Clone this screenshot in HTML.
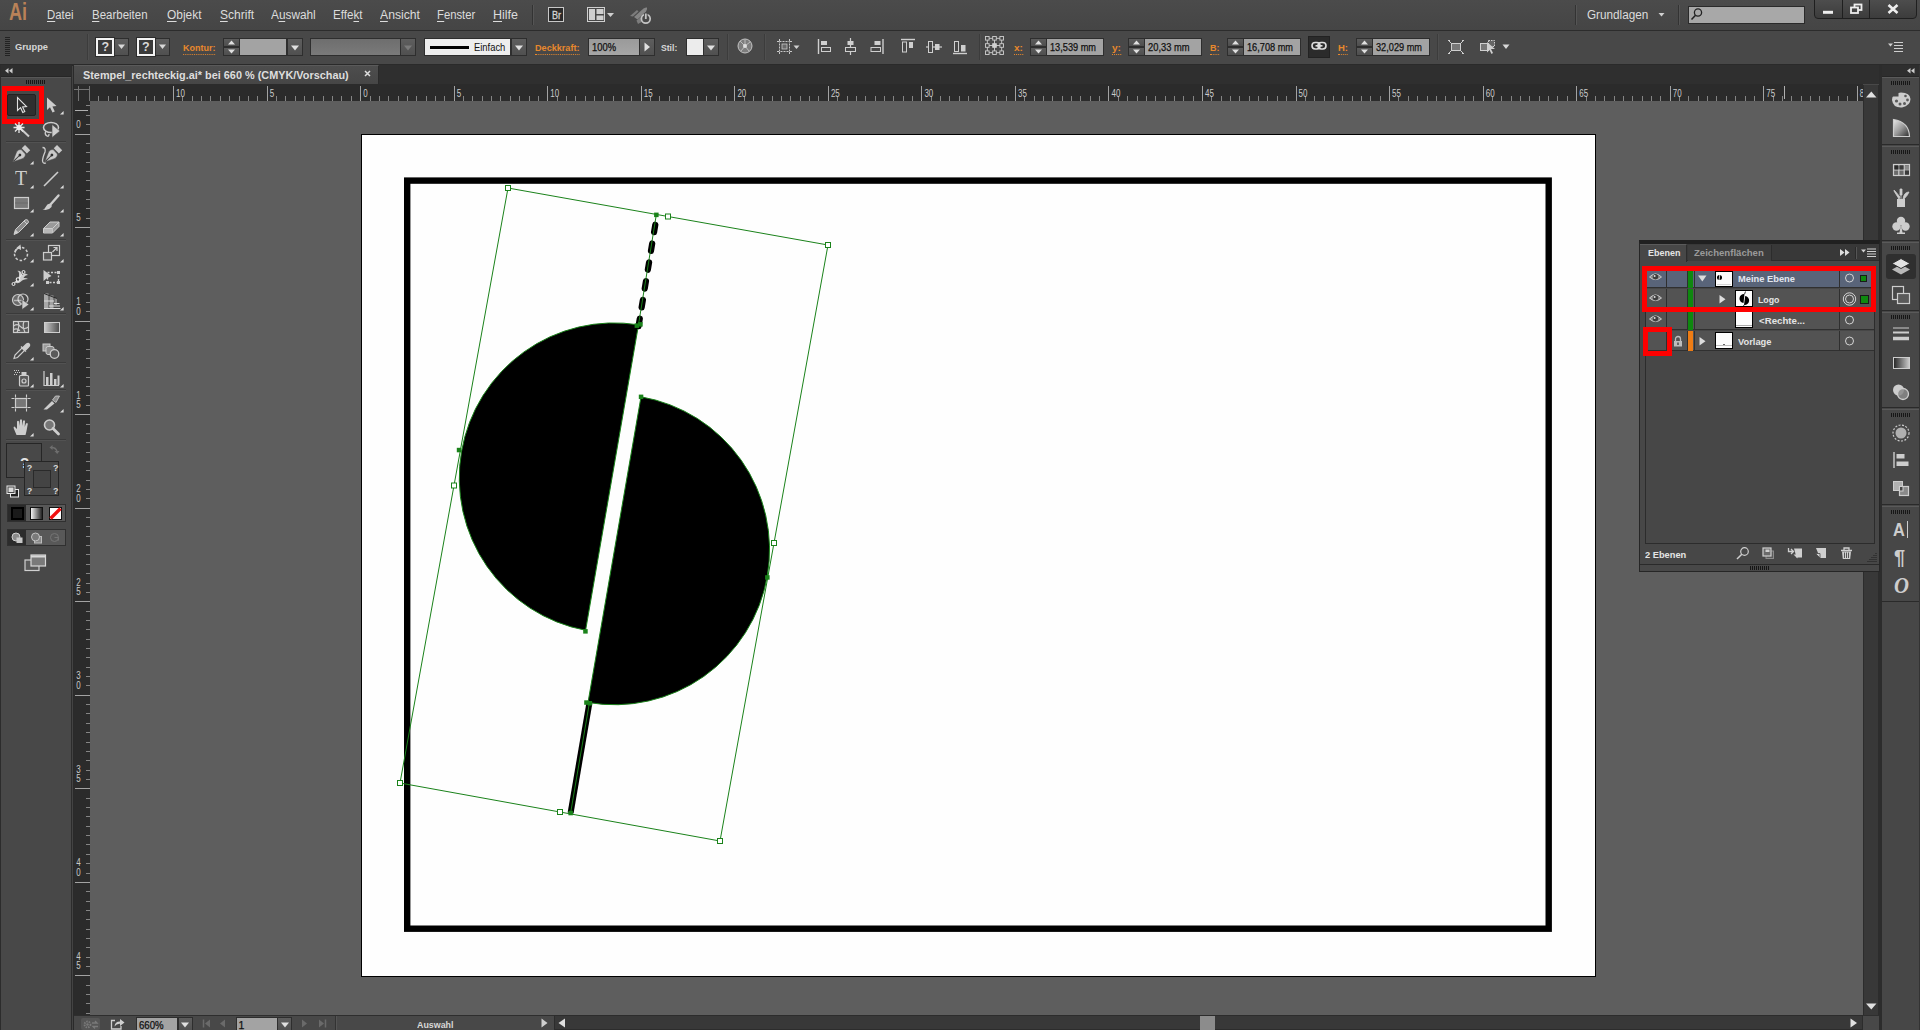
<!DOCTYPE html>
<html lang="de"><head><meta charset="utf-8"><title>Stempel_rechteckig.ai</title>
<style>
*{box-sizing:border-box;margin:0;padding:0}
html,body{width:1920px;height:1030px;overflow:hidden;background:#484848;font-family:"Liberation Sans",sans-serif;font-size:11px;color:#d8d8d8}
.a{position:absolute}
.t{position:absolute;white-space:nowrap;line-height:1}
svg{position:absolute;overflow:visible}
#menubar{left:0;top:0;width:1920px;height:30px;background:linear-gradient(#4b4b4b,#454545)}
#menubar .mi{position:absolute;top:8px;font-size:12.5px;color:#dcdcdc;white-space:nowrap;line-height:14px}
#menubar .mi i{position:absolute;top:12.500px;height:1px;background:#dcdcdc}
#ctrl{left:0;top:30px;width:1920px;height:35px;background:#484848;border-top:1px solid #2c2c2c;border-bottom:1px solid #2a2a2a}
#ctrl>*{margin-top:-1px}
.or{color:#e8882c;font-weight:bold}
.fld{position:absolute;background:#a3a3a3;border:1px solid #2e2e2e;color:#111;font-size:10.5px;line-height:16px;padding-left:3px;overflow:hidden;-webkit-text-stroke:.25px #111;white-space:nowrap}
.btn{position:absolute;background:linear-gradient(#5e5e5e,#505050);border:1px solid #2e2e2e}
.spin{position:absolute;width:17px;height:18px}
.spin i{position:absolute;left:0;width:17px;height:9px;background:linear-gradient(#5c5c5c,#4e4e4e);border:1px solid #2e2e2e}
.sep{position:absolute;width:1px;background:#333;box-shadow:1px 0 0 #555}
</style></head><body>
<div id="menubar" class="a">
<div class="t" style="left:8.800px;top:1.200px;font-size:23.500px;font-weight:bold;color:#b98258;transform:scaleX(.77);transform-origin:0 0">Ai</div>
<div class="mi" style="display:inline-block;transform:scaleX(0.9113);transform-origin:0 50%;left:47.4px"><i style="left:0.00px;width:9.03px"></i>Datei</div>
<div class="mi" style="display:inline-block;transform:scaleX(0.9195);transform-origin:0 50%;left:92px"><i style="left:0.00px;width:8.34px"></i>Bearbeiten</div>
<div class="mi" style="display:inline-block;transform:scaleX(0.9574);transform-origin:0 50%;left:167px"><i style="left:0.00px;width:9.73px"></i>Objekt</div>
<div class="mi" style="display:inline-block;transform:scaleX(0.9651);transform-origin:0 50%;left:219.8px"><i style="left:0.00px;width:8.34px"></i>Schrift</div>
<div class="mi" style="display:inline-block;transform:scaleX(0.9460);transform-origin:0 50%;left:271px"><i style="left:8.33px;width:6.97px"></i>Auswahl</div>
<div class="mi" style="display:inline-block;transform:scaleX(0.9296);transform-origin:0 50%;left:333.2px"><i style="left:22.00px;width:6.27px"></i>Effekt</div>
<div class="mi" style="display:inline-block;transform:scaleX(0.9756);transform-origin:0 50%;left:380px"><i style="left:0.00px;width:8.34px"></i>Ansicht</div>
<div class="mi" style="display:inline-block;transform:scaleX(0.9035);transform-origin:0 50%;left:436.7px"><i style="left:0.00px;width:7.64px"></i>Fenster</div>
<div class="mi" style="display:inline-block;transform:scaleX(0.9994);transform-origin:0 50%;left:493px"><i style="left:0.00px;width:9.03px"></i>Hilfe</div>
<div class="sep" style="left:532px;top:5px;height:20px"></div>
<div class="a" style="left:548px;top:7px;width:16px;height:15px;border:1px solid #c8c8c8;background:#2a2a2a"></div><div class="t" style="left:551.500px;top:9.500px;font-size:10.500px;color:#d4d4d4;transform:scaleX(.86);transform-origin:0 0;-webkit-text-stroke:.3px #d4d4d4">Br</div>
<svg style="left:587px;top:7px" width="30" height="16"><rect x="0.5" y="0.5" width="17" height="14" fill="none" stroke="#cfcfcf"/><rect x="2" y="2" width="6" height="11" fill="#cfcfcf"/><rect x="9.5" y="2" width="7" height="5" fill="#cfcfcf"/><rect x="9.5" y="8.5" width="7" height="4.5" fill="#cfcfcf"/><path d="M20 6h7l-3.5 4z" fill="#cfcfcf"/></svg>
<svg style="left:628px;top:4px" width="26" height="22"><path d="M2 12 L9 6 L10.500 7.500 L5 12.500z" fill="#7c7c7c"/><path d="M6 13 L15.500 4.500 Q18 3 19 3.500 Q19.500 5 18 7.500 L9.500 15.500z" fill="#858585"/><path d="M8.500 16.500 L13 13 L13.500 18 L10 20z" fill="#7c7c7c"/><circle cx="17.800" cy="14.800" r="4.400" fill="#484848" stroke="#c4c4c4" stroke-width="1.700"/><path d="M17.800 9v6" stroke="#484848" stroke-width="3.600"/><path d="M17.800 9.500v5.500" stroke="#c4c4c4" stroke-width="1.800"/></svg>
<div class="sep" style="left:1575px;top:5px;height:20px"></div>
<div class="mi" style="display:inline-block;transform:scaleX(0.9383);transform-origin:0 50%;left:1587.4px">Grundlagen</div>
<svg style="left:1658px;top:12px" width="8" height="6"><path d="M0.5 1h6l-3 3.5z" fill="#d0d0d0"/></svg>
<div class="sep" style="left:1678px;top:5px;height:20px"></div>
<div class="a" style="left:1688px;top:5.500px;width:117px;height:18px;background:#a8a8a8;border:1px solid #2a2a2a"></div>
<svg style="left:1690px;top:7px" width="14" height="14"><circle cx="8" cy="5.5" r="3.6" fill="none" stroke="#222" stroke-width="1.3"/><path d="M5.5 8.2 L1.5 12.5" stroke="#222" stroke-width="1.6"/></svg>
<div class="a" style="left:1814px;top:-2px;width:103px;height:21px;background:linear-gradient(#4e4e4e,#3c3c3c);border:1px solid #1f1f1f;border-radius:0 0 4px 4px"></div>
<div class="a" style="left:1842px;top:0;width:1px;height:18px;background:#1f1f1f"></div><div class="a" style="left:1869px;top:0;width:1px;height:18px;background:#1f1f1f"></div>
<svg style="left:1814px;top:0" width="103" height="19"><rect x="9" y="10.800" width="10" height="3" fill="#eee"/><rect x="40.500" y="4.500" width="7" height="5.500" fill="none" stroke="#eee" stroke-width="1.8"/><rect x="37" y="7.500" width="7" height="5.500" fill="#444" stroke="#eee" stroke-width="1.8"/><path d="M74.500 5 L83.500 13 M83.500 5 L74.500 13" stroke="#eee" stroke-width="2.6"/></svg>
</div>
<div id="ctrl" class="a">
<div class="a" style="left:5px;top:7px;width:5px;height:20px;background:repeating-linear-gradient(#222 0 1px,transparent 1px 2px)"></div>
<div class="t" style="display:inline-block;transform:scaleX(0.9471);transform-origin:0 50%;left:15px;top:11.500px;font-size:9.800px;font-weight:bold;color:#d6d6d6">Gruppe</div>
<div class="sep" style="left:87px;top:4px;height:26px;background:#3c3c3c;box-shadow:1px 0 0 #4f4f4f"></div>
<div class="a" style="left:96px;top:8px;width:18px;height:18px;border:2px solid #f4f4f4;background:#3a3a3a;outline:1px solid #2c2c2c"></div>
<div class="t" style="left:101.5px;top:11px;font-size:12.5px;font-weight:bold;color:#d8d8d8">?</div>
<div class="btn" style="left:114px;top:8px;width:15px;height:18px"></div>
<svg style="left:118px;top:14px" width="8" height="6"><path d="M0 0.500h7l-3.500 4.500z" fill="#d8d8d8"/></svg>
<div class="a" style="left:136.5px;top:8px;width:18px;height:18px;border:2px solid #f4f4f4;background:#3a3a3a;outline:1px solid #2c2c2c"></div>
<div class="t" style="left:142.0px;top:11px;font-size:12.5px;font-weight:bold;color:#d8d8d8">?</div>
<div class="btn" style="left:154.5px;top:8px;width:15px;height:18px"></div>
<svg style="left:158.5px;top:14px" width="8" height="6"><path d="M0 0.500h7l-3.500 4.500z" fill="#d8d8d8"/></svg>
<div class="t or" style="display:inline-block;transform:scaleX(0.9187);transform-origin:0 50%;left:183px;top:12.500px;font-size:9.800px;border-bottom:1px dotted #e8882c;padding-bottom:1.500px">Kontur:</div>
<div class="spin" style="left:222.5px;top:7.5px"><i style="top:0"></i><i style="top:9px"></i></div>
<svg style="left:222.5px;top:7.5px" width="17" height="18"><path d="M5 6.500h7l-3.500 -4z" fill="#e0e0e0"/><path d="M5 11.500h7l-3.500 4z" fill="#e0e0e0"/></svg>
<div class="fld" style="left:239px;top:7.500px;width:48px;height:18px"></div>
<div class="btn" style="left:286.5px;top:7.5px;width:16px;height:18px"></div>
<svg style="left:290.5px;top:14.5px" width="8" height="6"><path d="M0 0.500h8l-4 5z" fill="#e0e0e0"/></svg>
<div class="fld" style="left:309.500px;top:7.500px;width:91px;height:18px;background:linear-gradient(#6e6e6e,#7a7a7a)"></div>
<div class="btn" style="left:400px;top:7.5px;width:16px;height:18px"></div>
<svg style="left:404.0px;top:14.5px" width="8" height="6"><path d="M0 0.500h8l-4 5z" fill="#7a7a7a"/></svg>
<div class="fld" style="left:424px;top:7.500px;width:87px;height:18px;background:#eeeeee"></div>
<div class="a" style="left:430px;top:15.500px;width:39px;height:3px;background:#000"></div>
<div class="t" style="display:inline-block;transform:scaleX(0.8528);transform-origin:0 50%;left:473.500px;top:11.500px;font-size:11px;color:#111">Einfach</div>
<div class="btn" style="left:510.5px;top:7.5px;width:16px;height:18px"></div>
<svg style="left:514.5px;top:14.5px" width="8" height="6"><path d="M0 0.500h8l-4 5z" fill="#e0e0e0"/></svg>
<div class="t or" style="display:inline-block;transform:scaleX(0.9286);transform-origin:0 50%;left:535.300px;top:12.500px;font-size:9.800px;border-bottom:1px dotted #e8882c;padding-bottom:1.500px">Deckkraft:</div>
<div class="fld" style="left:587.500px;top:7.500px;width:52px;height:18px;background:linear-gradient(#9a9a9a,#a6a6a6)"><span style="display:inline-block;transform:scaleX(0.8935);transform-origin:0 50%;">100%</span></div>
<div class="btn" style="left:639px;top:7.500px;width:16px;height:18px"></div><svg style="left:644px;top:12px" width="7" height="10"><path d="M0.500 0.500v9l5.500 -4.500z" fill="#e0e0e0"/></svg>
<div class="t" style="display:inline-block;transform:scaleX(0.8803);transform-origin:0 50%;left:661px;top:12.500px;font-size:9.800px;font-weight:bold;color:#d6d6d6">Stil:</div>
<div class="fld" style="left:685.500px;top:7.500px;width:18px;height:18px;background:#ececec"></div>
<div class="btn" style="left:703px;top:7.5px;width:16px;height:18px"></div>
<svg style="left:707.0px;top:14.5px" width="8" height="6"><path d="M0 0.500h8l-4 5z" fill="#e0e0e0"/></svg>
<div class="sep" style="left:727px;top:4px;height:26px;background:#3c3c3c;box-shadow:1px 0 0 #4f4f4f"></div>
<svg style="left:737px;top:8px" width="16" height="16"><circle cx="8" cy="8" r="7" fill="#7d7d7d" stroke="#c4c4c4" stroke-width="1"/><path d="M8 8 L3 3 M8 8 L13 4 M8 8 L12 13 M8 8 L4 13 M8 8V1.500" stroke="#bbb" stroke-width="1"/><circle cx="8" cy="8" r="2" fill="#ddd"/></svg>
<div class="sep" style="left:763.500px;top:4px;height:26px;background:#3c3c3c;box-shadow:1px 0 0 #4f4f4f"></div>
<svg style="left:776px;top:8px" width="26" height="18"><rect x="3.500" y="3.500" width="10" height="10" fill="none" stroke="#c9c9c9" stroke-dasharray="2 1"/><rect x="6" y="6" width="5" height="5" fill="#6a6a6a" stroke="#c9c9c9" stroke-width=".8"/><path d="M1 3.500h2M1 13.500h2M14 3.500h2M14 13.500h2M3.500 1v2M13.500 1v2M3.500 14v2M13.500 14v2" stroke="#c9c9c9"/><path d="M17.500 7.500h6l-3 3.500z" fill="#d0d0d0"/></svg>
<svg style="left:817px;top:7.500px" width="16" height="18"><path d="M1.500 1v15" stroke="#cfcfcf" stroke-width="1.400"/><rect x="4" y="3" width="6" height="4" fill="#cfcfcf"/><rect x="4.500" y="9.500" width="9" height="4" fill="none" stroke="#cfcfcf"/></svg>
<svg style="left:844px;top:7.500px" width="14" height="18"><path d="M6.500 0v17" stroke="#cfcfcf" stroke-width="1.200"/><rect x="3.500" y="3" width="6" height="4" fill="#cfcfcf"/><rect x="1.500" y="9.500" width="10" height="4" fill="#484848" stroke="#cfcfcf"/></svg>
<svg style="left:869px;top:7.500px" width="16" height="18"><path d="M14 1v15" stroke="#cfcfcf" stroke-width="1.400"/><rect x="5.500" y="3" width="6" height="4" fill="#cfcfcf"/><rect x="2" y="9.500" width="9.500" height="4" fill="none" stroke="#cfcfcf"/></svg>
<svg style="left:900px;top:7.500px" width="16" height="18"><path d="M1 1.500h14" stroke="#cfcfcf" stroke-width="1.400"/><rect x="2.500" y="4" width="4" height="10" fill="none" stroke="#cfcfcf"/><rect x="9" y="4" width="4" height="6" fill="#cfcfcf"/></svg>
<svg style="left:926px;top:7.500px" width="17" height="18"><path d="M0 9h16" stroke="#cfcfcf" stroke-width="1.200"/><rect x="2.500" y="3.500" width="4" height="11" fill="#484848" stroke="#cfcfcf"/><rect x="9" y="6" width="4.500" height="6" fill="#cfcfcf"/></svg>
<svg style="left:953px;top:7.500px" width="16" height="18"><path d="M0 15.500h14" stroke="#cfcfcf" stroke-width="1.400"/><rect x="1.500" y="3.500" width="4" height="10" fill="none" stroke="#cfcfcf"/><rect x="8" y="7" width="4.500" height="6.500" fill="#cfcfcf"/></svg>
<div class="sep" style="left:978.500px;top:4px;height:26px;background:#3c3c3c;box-shadow:1px 0 0 #4f4f4f"></div>
<svg style="left:985px;top:6px" width="20" height="20"><rect x="2.300" y="2.300" width="14.400" height="14.400" fill="none" stroke="#cfcfcf" stroke-width=".9"/><path d="M2.300 9.500h14.400M9.500 2.300v14.400" stroke="#cfcfcf" stroke-width=".9"/><rect x="0.5" y="0.5" width="3.600" height="3.600" fill="#484848" stroke="#cfcfcf" stroke-width=".9"/><rect x="0.5" y="7.7" width="3.600" height="3.600" fill="#484848" stroke="#cfcfcf" stroke-width=".9"/><rect x="0.5" y="14.9" width="3.600" height="3.600" fill="#484848" stroke="#cfcfcf" stroke-width=".9"/><rect x="7.7" y="0.5" width="3.600" height="3.600" fill="#484848" stroke="#cfcfcf" stroke-width=".9"/><rect x="7.7" y="7.7" width="3.600" height="3.600" fill="#cfcfcf" stroke="#cfcfcf" stroke-width=".9"/><rect x="7.7" y="14.9" width="3.600" height="3.600" fill="#484848" stroke="#cfcfcf" stroke-width=".9"/><rect x="14.9" y="0.5" width="3.600" height="3.600" fill="#484848" stroke="#cfcfcf" stroke-width=".9"/><rect x="14.9" y="7.7" width="3.600" height="3.600" fill="#484848" stroke="#cfcfcf" stroke-width=".9"/><rect x="14.9" y="14.9" width="3.600" height="3.600" fill="#484848" stroke="#cfcfcf" stroke-width=".9"/></svg>
<div class="t or" style="display:inline-block;transform:scaleX(1.0323);transform-origin:0 50%;left:1013.5px;top:12.500px;font-size:9.800px;border-bottom:1px dotted #e8882c;padding-bottom:1.500px">x:</div>
<div class="spin" style="left:1029.5px;top:7.5px"><i style="top:0"></i><i style="top:9px"></i></div>
<svg style="left:1029.5px;top:7.5px" width="17" height="18"><path d="M5 6.500h7l-3.500 -4z" fill="#e0e0e0"/><path d="M5 11.500h7l-3.500 4z" fill="#e0e0e0"/></svg>
<div class="fld" style="left:1046px;top:7.500px;width:58px;height:18px"><span style="display:inline-block;transform:scaleX(0.8757);transform-origin:0 50%;">13,539 mm</span></div>
<div class="t or" style="display:inline-block;transform:scaleX(1.0323);transform-origin:0 50%;left:1112px;top:12.500px;font-size:9.800px;border-bottom:1px dotted #e8882c;padding-bottom:1.500px">y:</div>
<div class="spin" style="left:1127.5px;top:7.5px"><i style="top:0"></i><i style="top:9px"></i></div>
<svg style="left:1127.5px;top:7.5px" width="17" height="18"><path d="M5 6.500h7l-3.500 -4z" fill="#e0e0e0"/><path d="M5 11.500h7l-3.500 4z" fill="#e0e0e0"/></svg>
<div class="fld" style="left:1144px;top:7.500px;width:58px;height:18px"><span style="display:inline-block;transform:scaleX(0.8889);transform-origin:0 50%;">20,33 mm</span></div>
<div class="t or" style="display:inline-block;transform:scaleX(0.9184);transform-origin:0 50%;left:1210px;top:12.500px;font-size:9.800px;border-bottom:1px dotted #e8882c;padding-bottom:1.500px">B:</div>
<div class="spin" style="left:1226.5px;top:7.5px"><i style="top:0"></i><i style="top:9px"></i></div>
<svg style="left:1226.5px;top:7.5px" width="17" height="18"><path d="M5 6.500h7l-3.500 -4z" fill="#e0e0e0"/><path d="M5 11.500h7l-3.500 4z" fill="#e0e0e0"/></svg>
<div class="fld" style="left:1243px;top:7.500px;width:58px;height:18px"><span style="display:inline-block;transform:scaleX(0.8757);transform-origin:0 50%;">16,708 mm</span></div>
<div class="a" style="left:1308px;top:5.500px;width:22px;height:22px;background:#2b2b2b;border:1px solid #222"></div>
<svg style="left:1311px;top:11px" width="16" height="10"><rect x="1" y="1.500" width="8" height="6.500" rx="3.200" fill="none" stroke="#ddd" stroke-width="1.600"/><rect x="7" y="1.500" width="8" height="6.500" rx="3.200" fill="none" stroke="#ddd" stroke-width="1.600"/><path d="M4.500 4.800h7" stroke="#ddd" stroke-width="1.600"/></svg>
<div class="t or" style="display:inline-block;transform:scaleX(0.9668);transform-origin:0 50%;left:1338px;top:12.500px;font-size:9.800px;border-bottom:1px dotted #e8882c;padding-bottom:1.500px">H:</div>
<div class="spin" style="left:1355.5px;top:7.5px"><i style="top:0"></i><i style="top:9px"></i></div>
<svg style="left:1355.5px;top:7.5px" width="17" height="18"><path d="M5 6.500h7l-3.500 -4z" fill="#e0e0e0"/><path d="M5 11.500h7l-3.500 4z" fill="#e0e0e0"/></svg>
<div class="fld" style="left:1372px;top:7.500px;width:58px;height:18px"><span style="display:inline-block;transform:scaleX(0.8757);transform-origin:0 50%;">32,029 mm</span></div>
<div class="sep" style="left:1437px;top:4px;height:26px;background:#3c3c3c;box-shadow:1px 0 0 #4f4f4f"></div>
<svg style="left:1448px;top:9px" width="16" height="16"><rect x="3.500" y="4.500" width="9" height="7" fill="#777" stroke="#cfcfcf"/><path d="M0.500 1.500l3 3M15.500 1.500l-3 3M0.500 14.500l3 -3M15.500 14.500l-3 -3M0 1.500h2M14 1.500h2M0 14.500h2M14 14.500h2" stroke="#cfcfcf" stroke-width="1"/></svg>
<svg style="left:1479px;top:9px" width="32" height="16"><rect x="1.500" y="4.500" width="8" height="7" fill="#777" stroke="#cfcfcf"/><rect x="9.500" y="1.500" width="6" height="6" fill="#666" stroke="#cfcfcf" stroke-dasharray="1.500 1"/><path d="M8 3l8 7h-4l2 4-1.500 1-2-4-2.500 2.500z" fill="#cfcfcf"/><path d="M23.500 5.500h7l-3.500 4.500z" fill="#d8d8d8"/></svg>
<svg style="left:1888px;top:11px" width="16" height="12"><path d="M0 2.500h5l-2.500 3z" fill="#cfcfcf"/><path d="M6 1.500h9M6 4.500h9M6 7.500h9M6 10.500h9" stroke="#cfcfcf" stroke-width="1.200"/></svg>
</div>
<div id="tools" class="a" style="left:0;top:65px;width:72px;height:965px;background:#484848;border-left:1px solid #2c2c2c;border-right:1px solid #2c2c2c">
<div class="a" style="left:0;top:0;width:70px;height:12px;background:#2e2e2e;border-bottom:1px solid #262626"></div>
<svg style="left:3.800px;top:3px" width="9" height="6"><path d="M3.500 0v5.400l-3.500 -2.700zM7.500 0v5.400l-3.500 -2.700z" fill="#cdcdcd"/></svg>
<div class="a" style="left:0;top:12px;width:70px;height:1px;background:#575757"></div>
<div class="a" style="left:25px;top:15px;width:20px;height:4px;background:repeating-linear-gradient(90deg,#161616 0 1px,transparent 1px 2px)"></div>
<div class="a" style="left:5px;top:76.30000000000001px;width:60px;height:1px;background:#3a3a3a;box-shadow:0 1px 0 #525252"></div>
<div class="a" style="left:5px;top:174.3px;width:60px;height:1px;background:#3a3a3a;box-shadow:0 1px 0 #525252"></div>
<div class="a" style="left:5px;top:248px;width:60px;height:1px;background:#3a3a3a;box-shadow:0 1px 0 #525252"></div>
<div class="a" style="left:5px;top:297.4px;width:60px;height:1px;background:#3a3a3a;box-shadow:0 1px 0 #525252"></div>
<div class="a" style="left:5px;top:324px;width:60px;height:1px;background:#3a3a3a;box-shadow:0 1px 0 #525252"></div>
<div class="a" style="left:5px;top:374.4px;width:60px;height:1px;background:#3a3a3a;box-shadow:0 1px 0 #525252"></div>
<div class="a" style="left:6px;top:29px;width:29px;height:22px;background:#2f2f2f;border:1px solid #222;border-radius:2px"></div>
<div class="a" style="left:1px;top:20.700px;width:42.300px;height:38px;border:5px solid #fe0000"></div>
<svg style="left:10.0px;top:30.0px" width="20" height="20" viewBox="0 0 20 20"><path d="M6.500 2.500 L6.500 15.500 L9.600 12.700 L11.800 17.500 L13.800 16.600 L11.600 11.900 L15.500 11.500z" fill="#2f2f2f" stroke="#e0e0e0" stroke-width="1.100" stroke-linejoin="miter"/></svg>
<svg style="left:40.0px;top:30.0px" width="20" height="20" viewBox="0 0 20 20"><path d="M6 2.500 L6 15 L9 12.300 L11.500 17.500 L13.800 16.400 L11.400 11.400 L15.500 11z" fill="#cdcdcd"/></svg>
<svg style="left:58.8px;top:46.4px" width="4" height="4"><path d="M3.600 0v3.600h-3.600z" fill="#dcdcdc"/></svg>
<svg style="left:10.5px;top:54.5px" width="20" height="20" viewBox="0 0 20 20"><path d="M7.500 7.500 L17 16.500" stroke="#cdcdcd" stroke-width="2"/><path d="M7 2v11M1.500 7.500h11M3 3.500l8 8M11 3.500l-8 8" stroke="#e6e6e6" stroke-width="1.300"/><circle cx="7" cy="7.500" r="2.600" fill="#eee"/></svg>
<svg style="left:40.5px;top:55.30000000000001px" width="20" height="20" viewBox="0 0 20 20"><ellipse cx="9" cy="7.500" rx="7.500" ry="5" fill="none" stroke="#cdcdcd" stroke-width="1.500"/><path d="M4 11 q-2 3 1 5 q2 1 2 -2" fill="none" stroke="#cdcdcd" stroke-width="1.300"/><path d="M10 4.500 L10 17.500 L18 11z" fill="#cdcdcd" stroke="#484848" stroke-width=".6"/></svg>
<svg style="left:8.3px;top:77.1px" width="24" height="24" viewBox="0 0 24 24"><g transform="rotate(46 12 12)"><path d="M12 23.500 L7.300 13.500 Q6.800 10 9 8.800 L15 8.800 Q17.200 10 16.700 13.500z" fill="#c9c9c9" stroke="#484848" stroke-width=".5"/><path d="M12 22.500v-8" stroke="#3a3a3a" stroke-width="1"/><circle cx="12" cy="13.500" r="1.400" fill="#2e2e2e"/><rect x="8.300" y="2.800" width="7.400" height="4.600" fill="#c9c9c9"/></g></svg>
<svg style="left:28.8px;top:96.4px" width="4" height="4"><path d="M3.600 0v3.600h-3.600z" fill="#dcdcdc"/></svg>
<svg style="left:40.2px;top:77.30000000000001px" width="24" height="24" viewBox="0 0 24 24"><g transform="rotate(46 12 12)"><path d="M12 23.500 L7.300 13.500 Q6.800 10 9 8.800 L15 8.800 Q17.200 10 16.700 13.500z" fill="#c9c9c9" stroke="#484848" stroke-width=".5"/><path d="M12 22.500v-8" stroke="#3a3a3a" stroke-width="1"/><circle cx="12" cy="13.500" r="1.400" fill="#2e2e2e"/><rect x="8.300" y="2.800" width="7.400" height="4.600" fill="#c9c9c9"/></g><path d="M1.500 5.500 q3.500 0 2.500 4.500 q-2.500 6 -2.500 9 q0.500 3 3.500 2" fill="none" stroke="#cdcdcd" stroke-width="1.300"/></svg>
<div class="t" style="left:13.800px;top:103px;font-family:'Liberation Serif',serif;font-size:21px;color:#cdcdcd;transform:scaleX(.94);transform-origin:0 0">T</div>
<svg style="left:28.8px;top:120.4px" width="4" height="4"><path d="M3.600 0v3.600h-3.600z" fill="#dcdcdc"/></svg>
<svg style="left:40.0px;top:104.0px" width="20" height="20" viewBox="0 0 20 20"><path d="M3 17 L17 3" stroke="#cdcdcd" stroke-width="1.600"/></svg>
<svg style="left:58.8px;top:120.4px" width="4" height="4"><path d="M3.600 0v3.600h-3.600z" fill="#dcdcdc"/></svg>
<svg style="left:10.0px;top:128.0px" width="20" height="20" viewBox="0 0 20 20"><rect x="3.500" y="4.500" width="14" height="11" fill="#7a7a7a" stroke="#cdcdcd" stroke-width="1.200"/><path d="M4 10h13" stroke="#6a6a6a"/></svg>
<svg style="left:28.8px;top:144.4px" width="4" height="4"><path d="M3.600 0v3.600h-3.600z" fill="#dcdcdc"/></svg>
<svg style="left:40.0px;top:128.0px" width="20" height="20" viewBox="0 0 20 20"><path d="M17.500 2.500 L9.500 11.500" stroke="#cdcdcd" stroke-width="2.400" stroke-linecap="round"/><path d="M9.500 11 q-3 -1 -4.500 2.500 q-1 2.500 -3.500 3 q6 1.500 9 -2.500 q1 -1.500 -1 -3z" fill="#cdcdcd"/></svg>
<svg style="left:58.8px;top:144.4px" width="4" height="4"><path d="M3.600 0v3.600h-3.600z" fill="#dcdcdc"/></svg>
<svg style="left:10.0px;top:152.0px" width="20" height="20" viewBox="0 0 20 20"><path d="M3 17.500 L4.500 12.500 L14 3 Q16 2 17 3.500 Q18 5 17 6 L7.500 15.500z" fill="#8a8a8a" stroke="#cdcdcd" stroke-width="1"/><path d="M3 17.500 L4.500 12.500 L7.500 15.500z" fill="#cdcdcd"/><path d="M13 4l3 3" stroke="#cdcdcd"/></svg>
<svg style="left:28.8px;top:168.4px" width="4" height="4"><path d="M3.600 0v3.600h-3.600z" fill="#dcdcdc"/></svg>
<svg style="left:40.0px;top:152.0px" width="20" height="20" viewBox="0 0 20 20"><path d="M2.500 11.500 L9 5 L18 5 L18 9.500 L11.500 16 L2.500 16z" fill="#9a9a9a" stroke="#cdcdcd" stroke-width="1"/><path d="M2.500 11.500 L11.500 11.500 L18 5 M11.500 11.500V16" stroke="#cdcdcd" stroke-width="1" fill="none"/><path d="M3 12h8.500v4h-8.500z" fill="#b8b8b8"/></svg>
<svg style="left:58.8px;top:168.4px" width="4" height="4"><path d="M3.600 0v3.600h-3.600z" fill="#dcdcdc"/></svg>
<svg style="left:10.0px;top:178.0px" width="20" height="20" viewBox="0 0 20 20"><circle cx="10" cy="11" r="6.500" fill="none" stroke="#cdcdcd" stroke-width="1.500" stroke-dasharray="2.600 1.800"/><path d="M4 9.500 A6.500 6.500 0 0 1 10 4.500" fill="none" stroke="#cdcdcd" stroke-width="1.500"/><path d="M9.500 1.500 L5.500 4.700 L10 7z" fill="#cdcdcd"/></svg>
<svg style="left:28.8px;top:194.4px" width="4" height="4"><path d="M3.600 0v3.600h-3.600z" fill="#dcdcdc"/></svg>
<svg style="left:40.0px;top:178.0px" width="20" height="20" viewBox="0 0 20 20"><rect x="7.500" y="2.500" width="11" height="10" fill="none" stroke="#cdcdcd" stroke-width="1.200"/><rect x="2.500" y="9.500" width="8" height="7.500" fill="#5a5a5a" stroke="#cdcdcd" stroke-width="1.200"/><path d="M11.500 9 L16 4.500 M12.500 4.500h3.500v3.500" fill="none" stroke="#cdcdcd" stroke-width="1.200"/></svg>
<svg style="left:58.8px;top:194.4px" width="4" height="4"><path d="M3.600 0v3.600h-3.600z" fill="#dcdcdc"/></svg>
<svg style="left:10.0px;top:202.0px" width="20" height="20" viewBox="0 0 20 20"><path d="M3 15 Q7 14 8 9 Q8.500 4 6 4 Q10 3 11 8 Q14 5 17 8 Q14 8 12.500 11 Q15 10.500 17 12 Q12 12 10 14.500 Q7 17.500 3 15z" fill="#cdcdcd"/><circle cx="7" cy="12.500" r="1.800" fill="#484848" stroke="#f0f0f0" stroke-width="1.100"/><circle cx="12.500" cy="5" r="1.500" fill="#484848" stroke="#f0f0f0"/><circle cx="2.500" cy="17" r="1.500" fill="#484848" stroke="#f0f0f0"/><path d="M3.500 16l2.500 -2.500M8.200 11.200l3.300 -5" stroke="#f0f0f0" stroke-width=".8"/></svg>
<svg style="left:28.8px;top:218.4px" width="4" height="4"><path d="M3.600 0v3.600h-3.600z" fill="#dcdcdc"/></svg>
<svg style="left:40.0px;top:202.0px" width="20" height="20" viewBox="0 0 20 20"><rect x="6.500" y="5.500" width="11" height="10" fill="none" stroke="#cdcdcd" stroke-width="1.300" stroke-dasharray="2 1.500"/><path d="M2.500 3 L2.500 14 L5.500 11.500 L10.500 9z" fill="#cdcdcd"/><rect x="16" y="4" width="3" height="3" fill="#cdcdcd"/><rect x="16" y="14" width="3" height="3" fill="#cdcdcd"/><rect x="5" y="14" width="3" height="3" fill="#cdcdcd"/></svg>
<svg style="left:10.0px;top:226.0px" width="20" height="20" viewBox="0 0 20 20"><circle cx="7" cy="9" r="5.500" fill="#6a6a6a" stroke="#cdcdcd" stroke-width="1.200"/><circle cx="12" cy="8" r="5" fill="none" stroke="#cdcdcd" stroke-width="1.200"/><path d="M3.500 9.500h7" stroke="#fff" stroke-width="1.400" stroke-dasharray="1 1"/><path d="M11 8.500 L11 18.500 L18 13.500z" fill="#cdcdcd" stroke="#484848" stroke-width=".6"/></svg>
<svg style="left:28.8px;top:242.4px" width="4" height="4"><path d="M3.600 0v3.600h-3.600z" fill="#dcdcdc"/></svg>
<svg style="left:40.0px;top:226.0px" width="20" height="20" viewBox="0 0 20 20"><rect x="3" y="2.500" width="4.500" height="15" fill="#a8a8a8"/><rect x="8.500" y="4.500" width="4" height="13" fill="#a0a0a0"/><rect x="13.500" y="7" width="2.500" height="7" fill="#8c8c8c"/><path d="M3 10h10M3 17.500h16.500M8 15h11M13 12.500h5.500" stroke="#dcdcdc" stroke-width="1.200"/><path d="M3 2.500L16 7.500" stroke="#2a2a2a" stroke-width="1"/></svg>
<svg style="left:58.8px;top:242.4px" width="4" height="4"><path d="M3.600 0v3.600h-3.600z" fill="#dcdcdc"/></svg>
<svg style="left:10.0px;top:252.0px" width="20" height="20" viewBox="0 0 20 20"><rect x="2.500" y="4.500" width="15" height="11" fill="#5a5a5a" stroke="#cdcdcd" stroke-width="1.200"/><path d="M2.500 9 Q7 6 10 10 Q13 13 17.500 10 M7 4.500 Q9 9 6 15.500 M13 4.500 Q11 9 14 15.500 M2.500 12.500 Q6 11 9 13.500" fill="none" stroke="#cdcdcd" stroke-width="1.200"/></svg>
<div class="a" style="left:43px;top:256.5px;width:16px;height:11.500px;border:1px solid #cdcdcd;background:linear-gradient(90deg,#c8c8c8,#505050)"></div>
<svg style="left:10.0px;top:276.0px" width="20" height="20" viewBox="0 0 20 20"><path d="M3 17.500 L4 14 L11 7 L13.500 9.500 L6.500 16.500z" fill="#484848" stroke="#cdcdcd" stroke-width="1.200"/><path d="M10 5.500 L15 10.500 M11.500 7 L15.500 3 Q17.500 1.500 18.500 3.500 Q19 5 17.500 6 L14 9.500z" fill="#cdcdcd" stroke="#cdcdcd" stroke-width="1.400"/></svg>
<svg style="left:28.8px;top:292.4px" width="4" height="4"><path d="M3.600 0v3.600h-3.600z" fill="#dcdcdc"/></svg>
<svg style="left:40.0px;top:276.0px" width="20" height="20" viewBox="0 0 20 20"><rect x="2" y="3" width="7" height="7" fill="#9a9a9a" stroke="#cdcdcd"/><rect x="5" y="5.500" width="8" height="8" rx="2" fill="#8a8a8a" stroke="#cdcdcd"/><circle cx="13.500" cy="13" r="4.300" fill="#5a5a5a" stroke="#cdcdcd" stroke-width="1.300"/></svg>
<svg style="left:12.0px;top:303.0px" width="20" height="20" viewBox="0 0 20 20"><rect x="6.500" y="7.500" width="9" height="10.500" rx="1" fill="#5a5a5a" stroke="#cdcdcd" stroke-width="1.200"/><circle cx="11" cy="13" r="2" fill="none" stroke="#cdcdcd" stroke-width="1.200"/><rect x="8.500" y="4" width="5" height="3" fill="#cdcdcd"/><path d="M1 2.500h6M2 4.500h5M1 6.500h4" stroke="#cdcdcd" stroke-width="1" stroke-dasharray="1 1"/></svg>
<svg style="left:28.8px;top:319.4px" width="4" height="4"><path d="M3.600 0v3.600h-3.600z" fill="#dcdcdc"/></svg>
<svg style="left:40.0px;top:303.0px" width="20" height="20" viewBox="0 0 20 20"><path d="M3 3v14.500h15" fill="none" stroke="#cdcdcd" stroke-width="1.200"/><rect x="5" y="9" width="2.500" height="8" fill="#cdcdcd"/><rect x="9" y="5" width="2.500" height="12" fill="#cdcdcd"/><rect x="13" y="11" width="2.500" height="6" fill="#cdcdcd"/><rect x="16.500" y="7.500" width="2" height="9.500" fill="#cdcdcd"/></svg>
<svg style="left:58.8px;top:319.4px" width="4" height="4"><path d="M3.600 0v3.600h-3.600z" fill="#dcdcdc"/></svg>
<svg style="left:10.0px;top:328.0px" width="20" height="20" viewBox="0 0 20 20"><rect x="4.500" y="5.500" width="11" height="9" fill="#777" stroke="#cdcdcd" stroke-width="1.200"/><path d="M0.500 5.500h3M16.500 5.500h3M0.500 14.500h3M16.500 14.500h3M4.500 1.500v3M15.500 1.500v3M4.500 15.500v3M15.500 15.500v3" stroke="#cdcdcd" stroke-width="1.100"/></svg>
<svg style="left:40.0px;top:328.0px" width="20" height="20" viewBox="0 0 20 20"><path d="M2.500 16.500 L11 8 L13.500 10.500 L6 16.500z" fill="#cdcdcd"/><path d="M11.500 7 L14.500 3 L18.500 3 L15 9.500z" fill="#8d8d8d" stroke="#cdcdcd" stroke-width=".8"/></svg>
<svg style="left:58.8px;top:344.4px" width="4" height="4"><path d="M3.600 0v3.600h-3.600z" fill="#dcdcdc"/></svg>
<svg style="left:10.0px;top:352.0px" width="20" height="20" viewBox="0 0 20 20"><path d="M5.500 18 L3 12 Q2 9.500 3.500 9.500 L6 12 L6 4.500 Q7 3 8 4.500 L8.300 9 L9 3 Q10 1.500 11 3 L11 9 L12 4 Q13 2.500 14 4 L13.700 10 L15 6.500 Q16.500 5.500 16.800 7 L15.500 14 L14.500 18z" fill="#cdcdcd"/></svg>
<svg style="left:28.8px;top:368.4px" width="4" height="4"><path d="M3.600 0v3.600h-3.600z" fill="#dcdcdc"/></svg>
<svg style="left:40.0px;top:352.0px" width="20" height="20" viewBox="0 0 20 20"><circle cx="8.500" cy="8" r="5" fill="#777" stroke="#cdcdcd" stroke-width="1.600"/><path d="M12 11.500 L17.500 17" stroke="#cdcdcd" stroke-width="2.800" stroke-linecap="round"/></svg>
<div class="a" style="left:4.500px;top:377.700px;width:36px;height:35.300px;background:#484848;border:1px solid #262626"></div>
<div class="t" style="left:19px;top:390px;font-size:15px;font-weight:bold;color:#e4e4e4">?</div>
<div class="a" style="left:22.700px;top:396px;width:35.800px;height:35.300px;background:#484848;border:1px solid #262626"></div>
<div class="a" style="left:31.700px;top:405px;width:18px;height:17.500px;background:#444;border:1px solid #2a2a2a"></div>
<div class="t" style="left:25.7px;top:399px;font-size:9px;font-weight:bold;color:#d8d8d8">?</div>
<div class="t" style="left:52px;top:399px;font-size:9px;font-weight:bold;color:#d8d8d8">?</div>
<div class="t" style="left:25.7px;top:421.5px;font-size:9px;font-weight:bold;color:#d8d8d8">?</div>
<div class="t" style="left:52px;top:421.5px;font-size:9px;font-weight:bold;color:#d8d8d8">?</div>
<svg style="left:48px;top:379px" width="12" height="11"><path d="M2.500 3.500 Q7 3.500 8 7.500" fill="none" stroke="#6e6e6e" stroke-width="1.300"/><path d="M0.500 3.500l3 -2.500v5z M8.200 10l-2.700 -3h5z" fill="#6e6e6e"/></svg>
<svg style="left:5px;top:420px" width="14" height="13"><rect x="4.500" y="4.500" width="8" height="7.500" fill="#222" stroke="#e8e8e8"/><rect x="1" y="1" width="8" height="7.500" fill="#484848" stroke="#e8e8e8" stroke-width="1"/><rect x="2.500" y="2.500" width="5" height="4.500" fill="#dcdcdc"/></svg>
<div class="a" style="left:5.700px;top:439.300px;width:59px;height:18.200px;background:#585858;border:1px solid #303030"></div>
<div class="a" style="left:6.700px;top:440.300px;width:18.500px;height:16.200px;background:#2a2a2a"></div>
<div class="a" style="left:9.700px;top:442px;width:13px;height:13px;background:#1a1a1a;border:2px solid #000"></div>
<div class="a" style="left:28.700px;top:442px;width:13px;height:13px;background:linear-gradient(90deg,#f4f4f4,#222);border:1px solid #111"></div>
<svg style="left:47.700px;top:442px" width="13" height="13"><rect x=".5" y=".5" width="12" height="12" fill="#fff" stroke="#111"/><path d="M1.500 11.500L11.500 1.500" stroke="#f01010" stroke-width="3.300"/></svg>
<div class="a" style="left:5.700px;top:464.200px;width:59px;height:16.800px;background:#585858;border:1px solid #303030"></div>
<div class="a" style="left:6.700px;top:465.200px;width:18.500px;height:14.800px;background:#2c2c2c"></div>
<svg style="left:10.200px;top:467px" width="12" height="12"><circle cx="5" cy="5" r="4" fill="#8a8a8a" stroke="#d0d0d0"/><rect x="5.500" y="5.500" width="6" height="5.500" fill="#c8c8c8"/></svg>
<svg style="left:29.200px;top:467px" width="12" height="12"><rect x="4.500" y="4.500" width="7" height="6.500" fill="#8a8a8a" stroke="#bdbdbd"/><circle cx="5.500" cy="5" r="4" fill="#7a7a7a" stroke="#c4c4c4"/></svg>
<svg style="left:48.200px;top:467px" width="12" height="12"><circle cx="5.500" cy="5.500" r="4" fill="none" stroke="#747474"/><path d="M5.500 5.500h4v3" stroke="#747474" fill="none"/></svg>
<svg style="left:23px;top:489px" width="23" height="18"><rect x="1" y="6" width="14" height="10.500" fill="#5a5a5a" stroke="#d0d0d0" stroke-width="1.200"/><rect x="7" y="1" width="14.500" height="11" fill="#7a7a7a" stroke="#d8d8d8" stroke-width="1.200"/><path d="M7 2.500h14.500" stroke="#d8d8d8" stroke-width="2"/></svg>
</div>
<div class="a" style="left:73px;top:65px;width:1808px;height:19px;background:#2f2f2f"></div>
<div class="a" style="left:72px;top:65px;width:2px;height:965px;background:#2a2a2a"></div><div class="a" style="left:72px;top:66px;width:1px;height:964px;background:#434343"></div>
<div class="a" style="left:74px;top:65px;width:304.500px;height:19px;background:linear-gradient(#4d4d4d,#464646);border-right:1px solid #2a2a2a;border-top:1px solid #5a5a5a"></div>
<div class="t" id="tabtxt" style="display:inline-block;transform:scaleX(1.0356);transform-origin:0 50%;left:82.800px;top:69.500px;font-size:10.500px;font-weight:bold;color:#dedede">Stempel_rechteckig.ai* bei 660 % (CMYK/Vorschau)</div>
<svg style="left:364.300px;top:70.300px" width="8" height="8"><path d="M1 1l5 5M6 1L1 6" stroke="#dedede" stroke-width="1.500"/></svg>
<div class="a" style="left:74px;top:84px;width:1789px;height:17px;background:#2b2b2b"></div>
<div class="a" style="left:74px;top:85px;width:16px;height:930px;background:#2b2b2b"></div>
<div class="a" style="left:90px;top:101px;width:1773px;height:914px;background:#5e5e5e"></div>
<svg style="left:0;top:0" width="1920" height="1030"><path d="M173.5 85.500V101M267.1 85.500V101M360.6 85.500V101M454.1 85.500V101M547.7 85.500V101M641.2 85.500V101M734.8 85.500V101M828.3 85.500V101M921.8 85.500V101M1015.4 85.500V101M1108.9 85.500V101M1202.5 85.500V101M1296.0 85.500V101M1389.5 85.500V101M1483.1 85.500V101M1576.6 85.500V101M1670.2 85.500V101M1763.7 85.500V101M1857.2 85.500V101" stroke="#a2a2a2" stroke-width="1" shape-rendering="crispEdges"/><path d="M98.7 96V101M108.0 96V101M117.4 96V101M126.8 96V101M136.1 96V101M145.5 96V101M154.8 96V101M164.2 96V101M182.9 96V101M192.2 96V101M201.6 96V101M210.9 96V101M220.3 96V101M229.6 96V101M239.0 96V101M248.4 96V101M257.7 96V101M276.4 96V101M285.8 96V101M295.1 96V101M304.5 96V101M313.8 96V101M323.2 96V101M332.5 96V101M341.9 96V101M351.2 96V101M370.0 96V101M379.3 96V101M388.7 96V101M398.0 96V101M407.4 96V101M416.7 96V101M426.1 96V101M435.4 96V101M444.8 96V101M463.5 96V101M472.8 96V101M482.2 96V101M491.6 96V101M500.9 96V101M510.3 96V101M519.6 96V101M529.0 96V101M538.3 96V101M557.0 96V101M566.4 96V101M575.7 96V101M585.1 96V101M594.5 96V101M603.8 96V101M613.2 96V101M622.5 96V101M631.9 96V101M650.6 96V101M659.9 96V101M669.3 96V101M678.6 96V101M688.0 96V101M697.3 96V101M706.7 96V101M716.1 96V101M725.4 96V101M744.1 96V101M753.5 96V101M762.8 96V101M772.2 96V101M781.5 96V101M790.9 96V101M800.2 96V101M809.6 96V101M818.9 96V101M837.7 96V101M847.0 96V101M856.4 96V101M865.7 96V101M875.1 96V101M884.4 96V101M893.8 96V101M903.1 96V101M912.5 96V101M931.2 96V101M940.5 96V101M949.9 96V101M959.3 96V101M968.6 96V101M978.0 96V101M987.3 96V101M996.7 96V101M1006.0 96V101M1024.7 96V101M1034.1 96V101M1043.4 96V101M1052.8 96V101M1062.2 96V101M1071.5 96V101M1080.9 96V101M1090.2 96V101M1099.6 96V101M1118.3 96V101M1127.6 96V101M1137.0 96V101M1146.3 96V101M1155.7 96V101M1165.0 96V101M1174.4 96V101M1183.8 96V101M1193.1 96V101M1211.8 96V101M1221.2 96V101M1230.5 96V101M1239.9 96V101M1249.2 96V101M1258.6 96V101M1267.9 96V101M1277.3 96V101M1286.6 96V101M1305.4 96V101M1314.7 96V101M1324.1 96V101M1333.4 96V101M1342.8 96V101M1352.1 96V101M1361.5 96V101M1370.8 96V101M1380.2 96V101M1398.9 96V101M1408.2 96V101M1417.6 96V101M1427.0 96V101M1436.3 96V101M1445.7 96V101M1455.0 96V101M1464.4 96V101M1473.7 96V101M1492.4 96V101M1501.8 96V101M1511.1 96V101M1520.5 96V101M1529.8 96V101M1539.2 96V101M1548.6 96V101M1557.9 96V101M1567.3 96V101M1586.0 96V101M1595.3 96V101M1604.7 96V101M1614.0 96V101M1623.4 96V101M1632.7 96V101M1642.1 96V101M1651.5 96V101M1660.8 96V101M1679.5 96V101M1688.9 96V101M1698.2 96V101M1707.6 96V101M1716.9 96V101M1726.3 96V101M1735.6 96V101M1745.0 96V101M1754.3 96V101M1773.1 96V101M1782.4 96V101M1791.8 96V101M1801.1 96V101M1810.5 96V101M1819.8 96V101M1829.2 96V101M1838.5 96V101M1847.9 96V101" stroke="#858585" stroke-width="1" shape-rendering="crispEdges"/><text transform="translate(176.1 96.500) scale(.8 1)" font-size="10" fill="#cacaca" font-family="Liberation Sans, sans-serif">10</text><text transform="translate(269.7 96.500) scale(.8 1)" font-size="10" fill="#cacaca" font-family="Liberation Sans, sans-serif">5</text><text transform="translate(363.2 96.500) scale(.8 1)" font-size="10" fill="#cacaca" font-family="Liberation Sans, sans-serif">0</text><text transform="translate(456.7 96.500) scale(.8 1)" font-size="10" fill="#cacaca" font-family="Liberation Sans, sans-serif">5</text><text transform="translate(550.3 96.500) scale(.8 1)" font-size="10" fill="#cacaca" font-family="Liberation Sans, sans-serif">10</text><text transform="translate(643.8 96.500) scale(.8 1)" font-size="10" fill="#cacaca" font-family="Liberation Sans, sans-serif">15</text><text transform="translate(737.4 96.500) scale(.8 1)" font-size="10" fill="#cacaca" font-family="Liberation Sans, sans-serif">20</text><text transform="translate(830.9 96.500) scale(.8 1)" font-size="10" fill="#cacaca" font-family="Liberation Sans, sans-serif">25</text><text transform="translate(924.4 96.500) scale(.8 1)" font-size="10" fill="#cacaca" font-family="Liberation Sans, sans-serif">30</text><text transform="translate(1018.0 96.500) scale(.8 1)" font-size="10" fill="#cacaca" font-family="Liberation Sans, sans-serif">35</text><text transform="translate(1111.5 96.500) scale(.8 1)" font-size="10" fill="#cacaca" font-family="Liberation Sans, sans-serif">40</text><text transform="translate(1205.1 96.500) scale(.8 1)" font-size="10" fill="#cacaca" font-family="Liberation Sans, sans-serif">45</text><text transform="translate(1298.6 96.500) scale(.8 1)" font-size="10" fill="#cacaca" font-family="Liberation Sans, sans-serif">50</text><text transform="translate(1392.1 96.500) scale(.8 1)" font-size="10" fill="#cacaca" font-family="Liberation Sans, sans-serif">55</text><text transform="translate(1485.7 96.500) scale(.8 1)" font-size="10" fill="#cacaca" font-family="Liberation Sans, sans-serif">60</text><text transform="translate(1579.2 96.500) scale(.8 1)" font-size="10" fill="#cacaca" font-family="Liberation Sans, sans-serif">65</text><text transform="translate(1672.8 96.500) scale(.8 1)" font-size="10" fill="#cacaca" font-family="Liberation Sans, sans-serif">70</text><text transform="translate(1766.3 96.500) scale(.8 1)" font-size="10" fill="#cacaca" font-family="Liberation Sans, sans-serif">75</text><text transform="translate(1859.8 96.500) scale(.8 1)" font-size="10" fill="#cacaca" font-family="Liberation Sans, sans-serif">80</text><path d="M74.500 134.0H90M74.500 227.5H90M74.500 321.1H90M74.500 414.6H90M74.500 508.2H90M74.500 601.7H90M74.500 695.2H90M74.500 788.8H90M74.500 882.3H90M74.500 975.9H90" stroke="#a2a2a2" stroke-width="1" shape-rendering="crispEdges"/><path d="M85.500 105.9H90M85.500 115.3H90M85.500 124.6H90M85.500 143.4H90M85.500 152.7H90M85.500 162.1H90M85.500 171.4H90M85.500 180.8H90M85.500 190.1H90M85.500 199.5H90M85.500 208.8H90M85.500 218.2H90M85.500 236.9H90M85.500 246.2H90M85.500 255.6H90M85.500 265.0H90M85.500 274.3H90M85.500 283.7H90M85.500 293.0H90M85.500 302.4H90M85.500 311.7H90M85.500 330.4H90M85.500 339.8H90M85.500 349.1H90M85.500 358.5H90M85.500 367.8H90M85.500 377.2H90M85.500 386.6H90M85.500 395.9H90M85.500 405.3H90M85.500 424.0H90M85.500 433.3H90M85.500 442.7H90M85.500 452.0H90M85.500 461.4H90M85.500 470.7H90M85.500 480.1H90M85.500 489.5H90M85.500 498.8H90M85.500 517.5H90M85.500 526.9H90M85.500 536.2H90M85.500 545.6H90M85.500 554.9H90M85.500 564.3H90M85.500 573.6H90M85.500 583.0H90M85.500 592.3H90M85.500 611.1H90M85.500 620.4H90M85.500 629.8H90M85.500 639.1H90M85.500 648.5H90M85.500 657.8H90M85.500 667.2H90M85.500 676.5H90M85.500 685.9H90M85.500 704.6H90M85.500 713.9H90M85.500 723.3H90M85.500 732.7H90M85.500 742.0H90M85.500 751.4H90M85.500 760.7H90M85.500 770.1H90M85.500 779.4H90M85.500 798.1H90M85.500 807.5H90M85.500 816.8H90M85.500 826.2H90M85.500 835.5H90M85.500 844.9H90M85.500 854.3H90M85.500 863.6H90M85.500 873.0H90M85.500 891.7H90M85.500 901.0H90M85.500 910.4H90M85.500 919.7H90M85.500 929.1H90M85.500 938.4H90M85.500 947.8H90M85.500 957.2H90M85.500 966.5H90M85.500 985.2H90M85.500 994.6H90M85.500 1003.9H90M85.500 1013.3H90" stroke="#858585" stroke-width="1" shape-rendering="crispEdges"/><text transform="translate(76.300 127.5) scale(.8 1)" font-size="10" fill="#cacaca" font-family="Liberation Sans, sans-serif">0</text><text transform="translate(76.300 221.0) scale(.8 1)" font-size="10" fill="#cacaca" font-family="Liberation Sans, sans-serif">5</text><text transform="translate(76.300 314.6) scale(.8 1)" font-size="10" fill="#cacaca" font-family="Liberation Sans, sans-serif">0</text><text transform="translate(76.300 305.1) scale(.8 1)" font-size="10" fill="#cacaca" font-family="Liberation Sans, sans-serif">1</text><text transform="translate(76.300 408.1) scale(.8 1)" font-size="10" fill="#cacaca" font-family="Liberation Sans, sans-serif">5</text><text transform="translate(76.300 398.6) scale(.8 1)" font-size="10" fill="#cacaca" font-family="Liberation Sans, sans-serif">1</text><text transform="translate(76.300 501.7) scale(.8 1)" font-size="10" fill="#cacaca" font-family="Liberation Sans, sans-serif">0</text><text transform="translate(76.300 492.2) scale(.8 1)" font-size="10" fill="#cacaca" font-family="Liberation Sans, sans-serif">2</text><text transform="translate(76.300 595.2) scale(.8 1)" font-size="10" fill="#cacaca" font-family="Liberation Sans, sans-serif">5</text><text transform="translate(76.300 585.7) scale(.8 1)" font-size="10" fill="#cacaca" font-family="Liberation Sans, sans-serif">2</text><text transform="translate(76.300 688.7) scale(.8 1)" font-size="10" fill="#cacaca" font-family="Liberation Sans, sans-serif">0</text><text transform="translate(76.300 679.2) scale(.8 1)" font-size="10" fill="#cacaca" font-family="Liberation Sans, sans-serif">3</text><text transform="translate(76.300 782.3) scale(.8 1)" font-size="10" fill="#cacaca" font-family="Liberation Sans, sans-serif">5</text><text transform="translate(76.300 772.8) scale(.8 1)" font-size="10" fill="#cacaca" font-family="Liberation Sans, sans-serif">3</text><text transform="translate(76.300 875.8) scale(.8 1)" font-size="10" fill="#cacaca" font-family="Liberation Sans, sans-serif">0</text><text transform="translate(76.300 866.3) scale(.8 1)" font-size="10" fill="#cacaca" font-family="Liberation Sans, sans-serif">4</text><text transform="translate(76.300 969.4) scale(.8 1)" font-size="10" fill="#cacaca" font-family="Liberation Sans, sans-serif">5</text><text transform="translate(76.300 959.9) scale(.8 1)" font-size="10" fill="#cacaca" font-family="Liberation Sans, sans-serif">4</text><path d="M1784.500 85.500V99" stroke="#b0b0b0" stroke-width="1" shape-rendering="crispEdges"/><path d="M74.500 110.500H88" stroke="#b0b0b0" stroke-width="1" shape-rendering="crispEdges"/><rect x="74" y="85" width="16" height="16" fill="#2b2b2b"/><path d="M78.500 85.500v15.500M74 89.500h16M89.500 85.500v15.500" stroke="#747474" stroke-width="1" shape-rendering="crispEdges"/></svg>
<div class="a" style="left:361px;top:134px;width:1235px;height:843px;background:#fefefe;border:1px solid #000"></div>
<svg style="left:0;top:0" width="1920" height="1030"><rect x="407.200" y="180.600" width="1141.500" height="748.100" fill="none" stroke="#000" stroke-width="6.400"/></svg>
<svg style="left:0;top:0" width="1920" height="1030"><path d="M638.5 324.8 A155.04 155.04 0 0 0 585.6 630.3 Z" fill="#000" stroke="#1a821a" stroke-width="1"/><path d="M641.0 396.8 A155.1 155.1 0 0 1 588.0 702.5 Z" fill="#000" stroke="#1a821a" stroke-width="1"/><path d="M655.3 224.7 L638.4 327.0" stroke="#000" stroke-width="6.200" stroke-linecap="round" stroke-dasharray="7.600 11.450" fill="none"/><path d="M656.3 214.8 L638.6 324.0" stroke="#1a821a" stroke-width="1" fill="none"/><path d="M589.400 702.900 L570.600 813" stroke="#000" stroke-width="6" fill="none"/><path d="M589.400 702.900 L570.600 813" stroke="#1a821a" stroke-width="1" fill="none"/><path d="M508.0 188.0 L828.0 245.0 L720.0 841.0 L400.0 783.0 Z" stroke="#1a821a" stroke-width="1" fill="none"/><rect x="505.5" y="185.5" width="5" height="5" fill="#fff" stroke="#1a821a" stroke-width="1"/><rect x="825.5" y="242.5" width="5" height="5" fill="#fff" stroke="#1a821a" stroke-width="1"/><rect x="717.5" y="838.5" width="5" height="5" fill="#fff" stroke="#1a821a" stroke-width="1"/><rect x="397.5" y="780.5" width="5" height="5" fill="#fff" stroke="#1a821a" stroke-width="1"/><rect x="665.5" y="214.0" width="5" height="5" fill="#fff" stroke="#1a821a" stroke-width="1"/><rect x="771.5" y="540.5" width="5" height="5" fill="#fff" stroke="#1a821a" stroke-width="1"/><rect x="557.5" y="809.5" width="5" height="5" fill="#fff" stroke="#1a821a" stroke-width="1"/><rect x="451.5" y="483.0" width="5" height="5" fill="#fff" stroke="#1a821a" stroke-width="1"/><rect x="654.1" y="212.6" width="4.500" height="4.500" fill="#1a821a"/><rect x="638.2" y="322.1" width="4.500" height="4.500" fill="#1a821a"/><rect x="634.6" y="323.4" width="4.500" height="4.500" fill="#1a821a"/><rect x="638.8" y="394.6" width="4.500" height="4.500" fill="#1a821a"/><rect x="456.8" y="447.8" width="4.500" height="4.500" fill="#1a821a"/><rect x="583.2" y="629.1" width="4.500" height="4.500" fill="#1a821a"/><rect x="765.1" y="575.2" width="4.500" height="4.500" fill="#1a821a"/><rect x="584.2" y="700.3" width="4.500" height="4.500" fill="#1a821a"/><rect x="587.6" y="701.0" width="4.500" height="4.500" fill="#1a821a"/><rect x="568.4" y="810.8" width="4.500" height="4.500" fill="#1a821a"/></svg>
<div class="a" style="left:1863px;top:85px;width:16px;height:930px;background:#383838;border-left:1px solid #2c2c2c;border-right:1px solid #2c2c2c"></div>
<svg style="left:1866px;top:91px" width="11" height="7"><path d="M0 6.500h10.500l-5.200 -6z" fill="#e0e0e0"/></svg>
<svg style="left:1866px;top:1003px" width="11" height="7"><path d="M0 0.500h10.500l-5.200 6z" fill="#e0e0e0"/></svg>
<div class="a" style="left:1879px;top:65px;width:3px;height:965px;background:#2c2c2c"></div>
<div class="a" style="left:74px;top:1015px;width:1805px;height:15px;background:#484848;border-top:1px solid #2e2e2e"></div>
<div class="a" style="left:81px;top:1018px;width:19px;height:12px;background:#565656;border-radius:2px"></div>
<svg style="left:83px;top:1019px" width="16" height="11"><circle cx="4.500" cy="5.500" r="3" fill="none" stroke="#7a7a7a" stroke-width="1.800" stroke-dasharray="1.500 1"/><circle cx="4.500" cy="5.500" r="1.200" fill="#7a7a7a"/><path d="M9 4h5l-2 -2M15 7.500h-5l2 2" stroke="#7a7a7a" stroke-width="1.300" fill="none"/></svg>
<svg style="left:110px;top:1017px" width="15" height="13"><path d="M5 3.500h-3.500v8.500h9.500v-3" fill="none" stroke="#d0d0d0" stroke-width="1.300"/><path d="M4.500 9.500 Q5 4.500 10 4.500 V2 L14.500 5.500 L10 9 V6.800 Q6.500 6.500 4.500 9.500z" fill="#d0d0d0"/></svg>
<div class="fld" style="left:135.500px;top:1016.500px;width:42.500px;height:15px;font-size:10px;line-height:15px;padding-left:2.500px"><span style="display:inline-block;transform:scaleX(0.9618);transform-origin:0 50%;">660%</span></div>
<div class="btn" style="left:177.500px;top:1016.500px;width:15px;height:15px"></div><svg style="left:181px;top:1022px" width="8" height="6"><path d="M0 0.500h8l-4 5z" fill="#e0e0e0"/></svg>
<svg style="left:202px;top:1019px" width="30" height="10"><path d="M1.500 0.500v8" stroke="#6a6a6a" stroke-width="1.500"/><path d="M8 0.500v8l-5 -4z" fill="#6a6a6a"/><path d="M23 0.500v8l-5 -4z" fill="#6a6a6a"/></svg>
<div class="fld" style="left:235.500px;top:1016.500px;width:42px;height:15px;font-size:10.500px;line-height:15px;padding-left:2px">1</div>
<div class="btn" style="left:277px;top:1016.500px;width:15px;height:15px"></div><svg style="left:280.500px;top:1022px" width="8" height="6"><path d="M0 0.500h8l-4 5z" fill="#e0e0e0"/></svg>
<svg style="left:300px;top:1019px" width="30" height="10"><path d="M2 0.500v8l5 -4z" fill="#6a6a6a"/><path d="M19 0.500v8l5 -4z" fill="#6a6a6a"/><path d="M25.500 0.500v8" stroke="#6a6a6a" stroke-width="1.500"/></svg>
<div class="sep" style="left:335px;top:1016px;height:14px"></div>
<div class="t" style="display:inline-block;transform:scaleX(0.9058);transform-origin:0 50%;left:416.700px;top:1020px;font-size:9.800px;font-weight:bold;color:#d8d8d8">Auswahl</div>
<svg style="left:541px;top:1018px" width="8" height="11"><path d="M0.500 0.500v9l6 -4.500z" fill="#d0d0d0"/></svg>
<div class="a" style="left:554px;top:1015px;width:1309px;height:15px;background:#383838;border:1px solid #2c2c2c"></div>
<svg style="left:558px;top:1018px" width="8" height="11"><path d="M7 0.500v9l-6.500 -4.500z" fill="#e0e0e0"/></svg>
<svg style="left:1850px;top:1018px" width="8" height="11"><path d="M0.500 0.500v9l6.500 -4.500z" fill="#e0e0e0"/></svg>
<div class="a" style="left:1200px;top:1016px;width:15px;height:14px;background:#8c8c8c"></div>
<div class="a" style="left:1882px;top:65px;width:38px;height:965px;background:#474747;border-right:1px solid #333"></div>
<div class="a" style="left:1882px;top:65px;width:37px;height:12px;background:#2e2e2e;border-bottom:1px solid #262626"></div>
<svg style="left:1906.500px;top:68px" width="9" height="6"><path d="M3.500 0v5.400l-3.500 -2.700zM7.500 0v5.400l-3.500 -2.700z" fill="#cdcdcd"/></svg>
<div class="a" style="left:1882px;top:77px;width:37px;height:68px;border-top:1px solid #5a5a5a;border-bottom:1px solid #2a2a2a"></div>
<div class="a" style="left:1891px;top:80.5px;width:20px;height:4px;background:repeating-linear-gradient(90deg,#161616 0 1px,transparent 1px 2px)"></div>
<div class="a" style="left:1882px;top:146px;width:37px;height:95px;border-top:1px solid #5a5a5a;border-bottom:1px solid #2a2a2a"></div>
<div class="a" style="left:1891px;top:149.5px;width:20px;height:4px;background:repeating-linear-gradient(90deg,#161616 0 1px,transparent 1px 2px)"></div>
<div class="a" style="left:1882px;top:242px;width:37px;height:68.5px;border-top:1px solid #5a5a5a;border-bottom:1px solid #2a2a2a"></div>
<div class="a" style="left:1891px;top:245.5px;width:20px;height:4px;background:repeating-linear-gradient(90deg,#161616 0 1px,transparent 1px 2px)"></div>
<div class="a" style="left:1882px;top:311.5px;width:37px;height:96.5px;border-top:1px solid #5a5a5a;border-bottom:1px solid #2a2a2a"></div>
<div class="a" style="left:1891px;top:315.0px;width:20px;height:4px;background:repeating-linear-gradient(90deg,#161616 0 1px,transparent 1px 2px)"></div>
<div class="a" style="left:1882px;top:409px;width:37px;height:96px;border-top:1px solid #5a5a5a;border-bottom:1px solid #2a2a2a"></div>
<div class="a" style="left:1891px;top:412.5px;width:20px;height:4px;background:repeating-linear-gradient(90deg,#161616 0 1px,transparent 1px 2px)"></div>
<div class="a" style="left:1882px;top:506px;width:37px;height:96px;border-top:1px solid #5a5a5a;border-bottom:1px solid #2a2a2a"></div>
<div class="a" style="left:1891px;top:509.5px;width:20px;height:4px;background:repeating-linear-gradient(90deg,#161616 0 1px,transparent 1px 2px)"></div>
<svg style="left:1889.0px;top:88.0px" width="24" height="24" viewBox="0 0 24 24"><path d="M3 12 Q3 5 12 4.500 Q21 4.500 21.500 11 Q21.500 17.500 13 19.500 Q4 20 3 12z" fill="#cdcdcd"/><path d="M3 8.500 h6.500 v-4 h-6.500z" fill="#474747"/><circle cx="7.500" cy="13" r="1.600" fill="#5a5a5a"/><circle cx="11" cy="16" r="1.500" fill="#5a5a5a"/><circle cx="15.500" cy="15.500" r="1.500" fill="#5a5a5a"/><circle cx="18.500" cy="12" r="1.400" fill="#5a5a5a"/><circle cx="16.500" cy="8" r="1.300" fill="#5a5a5a"/></svg>
<svg style="left:1889.0px;top:116.0px" width="24" height="24" viewBox="0 0 24 24"><defs><linearGradient id="cg" x1="0" y1="0" x2="1" y2="1"><stop offset="0" stop-color="#e8e8e8"/><stop offset=".5" stop-color="#9a9a9a"/><stop offset="1" stop-color="#2a2a2a"/></linearGradient></defs><path d="M4.500 3.500 Q20 6 20.500 20.500 L4.500 20.500z" fill="url(#cg)" stroke="#cdcdcd" stroke-width="1.200"/></svg>
<svg style="left:1889.0px;top:158.0px" width="24" height="24" viewBox="0 0 24 24"><rect x="4.500" y="6.500" width="16" height="11" fill="#6a6a6a" stroke="#cdcdcd" stroke-width="1.200"/><path d="M9.800 6.500v11M15.200 6.500v11M4.500 12h16" stroke="#cdcdcd" stroke-width="1.200"/><rect x="5.500" y="7.500" width="4" height="4" fill="#2a2a2a"/><rect x="10.500" y="7.500" width="4" height="4" fill="#3c3c3c"/><rect x="16" y="12.500" width="4" height="4" fill="#3a3a3a"/><rect x="16" y="7.500" width="4" height="4" fill="#8a8a8a"/></svg>
<svg style="left:1889.0px;top:186.0px" width="24" height="24" viewBox="0 0 24 24"><rect x="8" y="13" width="8" height="8" fill="#cdcdcd"/><path d="M10 13 L5 5 Q4.500 3.500 6 5 L11 11z M12 13V5 M11 3h2v6h-2z M14 13 Q15 6 20 6 Q19 9 15 13z" fill="#cdcdcd" stroke="#cdcdcd" stroke-width=".8"/></svg>
<svg style="left:1889.0px;top:214.0px" width="24" height="24" viewBox="0 0 24 24"><circle cx="12" cy="7" r="4.200" fill="#cdcdcd"/><circle cx="7.500" cy="12.500" r="4.200" fill="#cdcdcd"/><circle cx="16.500" cy="12.500" r="4.200" fill="#cdcdcd"/><path d="M12 10 L10.500 18.500 h-2.500 v1.500 h8 v-1.500 h-2.500z" fill="#cdcdcd"/></svg>
<div class="a" style="left:1886px;top:254px;width:30px;height:25px;background:#2f2f2f;border-radius:3px"></div>
<svg style="left:1889.0px;top:255.0px" width="24" height="24" viewBox="0 0 24 24"><path d="M12 9.500 L21 14.500 L12 19.500 L3 14.500z" fill="#b8b8b8"/><path d="M12 3.500 L21 8.500 L12 13.500 L3 8.500z" fill="#e2e2e2" stroke="#2f2f2f" stroke-width="1"/></svg>
<svg style="left:1889.0px;top:283.0px" width="24" height="24" viewBox="0 0 24 24"><rect x="3.500" y="3.500" width="11" height="13" fill="#474747" stroke="#cdcdcd" stroke-width="1.200"/><rect x="8.500" y="10.500" width="12" height="10" fill="#5a5a5a" stroke="#cdcdcd" stroke-width="1.200"/></svg>
<svg style="left:1889.0px;top:323.0px" width="24" height="24" viewBox="0 0 24 24"><path d="M4 5h16" stroke="#cdcdcd" stroke-width="1"/><path d="M4 9.500h16" stroke="#cdcdcd" stroke-width="2"/><path d="M4 15.500h16" stroke="#cdcdcd" stroke-width="3.500"/></svg>
<div class="a" style="left:1893px;top:357px;width:17px;height:12px;border:1px solid #cdcdcd;background:linear-gradient(90deg,#2a2a2a,#c8c8c8)"></div>
<svg style="left:1889.0px;top:380.0px" width="24" height="24" viewBox="0 0 24 24"><circle cx="9.500" cy="10" r="5.500" fill="#cdcdcd"/><circle cx="14" cy="14" r="5.500" fill="#8a8a8a" fill-opacity=".85" stroke="#cdcdcd" stroke-width="1.300"/></svg>
<svg style="left:1889.0px;top:421.0px" width="24" height="24" viewBox="0 0 24 24"><circle cx="12" cy="12" r="8" fill="none" stroke="#cdcdcd" stroke-width="1.200" stroke-dasharray="2 1.500"/><circle cx="12" cy="12" r="5.500" fill="#b0b0b0"/></svg>
<svg style="left:1889.0px;top:448.0px" width="24" height="24" viewBox="0 0 24 24"><path d="M5 4v16" stroke="#cdcdcd" stroke-width="1.400"/><rect x="7.500" y="6" width="8" height="4.500" fill="#cdcdcd"/><rect x="7.500" y="13.500" width="12" height="4.500" fill="#cdcdcd"/></svg>
<svg style="left:1889.0px;top:476.0px" width="24" height="24" viewBox="0 0 24 24"><rect x="4.500" y="5.500" width="9" height="9" fill="#b0b0b0" stroke="#cdcdcd"/><rect x="10.500" y="10.500" width="9" height="9" fill="#8a8a8a" stroke="#cdcdcd" stroke-width="1.200"/><rect x="10.500" y="10.500" width="3.500" height="4.500" fill="#474747" stroke="#cdcdcd"/></svg>
<div class="t" style="left:1892.500px;top:520px;font-size:19px;font-weight:bold;color:#cdcdcd;transform:scaleX(.86);transform-origin:0 0">A</div><div class="a" style="left:1906.500px;top:521px;width:1.500px;height:17px;background:#cdcdcd"></div>
<div class="t" style="left:1894px;top:547px;font-size:20px;font-weight:bold;color:#cdcdcd">¶</div>
<div class="t" style="left:1894px;top:574px;font-family:'Liberation Serif',serif;font-style:italic;font-weight:bold;font-size:23px;color:#cdcdcd;transform:scaleX(.9);transform-origin:0 0">O</div>
<div class="a" id="layers" style="left:1639px;top:240px;width:241px;height:332px;background:#474747;border:1px solid #262626;border-top:4px solid #202020">
<div class="a" style="left:0;top:0;width:239px;height:17px;background:#383838;border-bottom:1px solid #2c2c2c"></div>
<div class="a" style="left:0;top:0;width:47px;height:18px;background:#474747;border-right:1px solid #2c2c2c;border-top:1px solid #5a5a5a"></div>
<div class="t" style="display:inline-block;transform:scaleX(0.9349);transform-origin:0 50%;left:7.599999999999909px;top:4px;font-size:9.600px;font-weight:bold;color:#e4e4e4">Ebenen</div>
<div class="a" style="left:48px;top:1px;width:84px;height:16px;background:#3d3d3d;border-right:1px solid #2c2c2c"></div>
<div class="t" style="display:inline-block;transform:scaleX(0.9994);transform-origin:0 50%;left:54.200000000000045px;top:4px;font-size:9.600px;font-weight:bold;color:#9a9a9a">Zeichenflächen</div>
<svg style="left:200px;top:4.5px" width="10" height="8"><path d="M0 0v7l4.500 -3.500zM5 0v7l4.500 -3.500z" fill="#dcdcdc"/></svg>
<div class="a" style="left:215px;top:3px;width:1px;height:12px;background:#2a2a2a;box-shadow:1px 0 0 #555"></div>
<svg style="left:221px;top:4px" width="16" height="9"><path d="M0 1.500h5l-2.500 3z" fill="#d0d0d0"/><path d="M6 1h9M6 3.500h9M6 6h9M6 8.500h9" stroke="#d0d0d0" stroke-width="1"/></svg>
<div class="a" style="left:5px;top:22px;width:230px;height:278px;background:#474747;border:1px solid #2c2c2c"></div>
<div class="a" style="left:6px;top:24px;width:228px;height:20px;background:#596479;border-bottom:1px solid #303030"></div>
<div class="a" style="left:26px;top:24px;width:1px;height:20px;background:#2f2f2f"></div>
<div class="a" style="left:47px;top:24px;width:1px;height:20px;background:#2f2f2f"></div>
<div class="a" style="left:53.5px;top:24px;width:1px;height:20px;background:#2f2f2f"></div>
<div class="a" style="left:199px;top:24px;width:1px;height:20px;background:#2f2f2f"></div>
<div class="a" style="left:48px;top:24px;width:4.500px;height:20px;background:#0f880f"></div>
<svg style="left:203px;top:27px" width="14" height="14"><circle cx="6.500" cy="7" r="4" fill="none" stroke="#d4d4d4" stroke-width="1"/></svg>
<svg style="left:8.5px;top:28px" width="13" height="10"><path d="M0.500 5 Q6.500 -1.200 12.500 5 Q6.500 10.200 0.500 5z" fill="#8a8a8a" stroke="#c8c8c8" stroke-width="1"/><circle cx="6.500" cy="4.800" r="2.700" fill="#3e3e3e"/><circle cx="5.600" cy="3.900" r="1" fill="#d8d8d8"/></svg>
<div class="a" style="left:6px;top:45px;width:228px;height:20px;background:#535353;border-bottom:1px solid #303030"></div>
<div class="a" style="left:26px;top:45px;width:1px;height:20px;background:#2f2f2f"></div>
<div class="a" style="left:47px;top:45px;width:1px;height:20px;background:#2f2f2f"></div>
<div class="a" style="left:53.5px;top:45px;width:1px;height:20px;background:#2f2f2f"></div>
<div class="a" style="left:199px;top:45px;width:1px;height:20px;background:#2f2f2f"></div>
<div class="a" style="left:48px;top:45px;width:4.500px;height:20px;background:#0f880f"></div>
<svg style="left:203px;top:48px" width="14" height="14"><circle cx="6.500" cy="7" r="4" fill="none" stroke="#d4d4d4" stroke-width="1"/><circle cx="6.500" cy="7" r="6.200" fill="none" stroke="#d4d4d4" stroke-width="1"/></svg>
<svg style="left:8.5px;top:49px" width="13" height="10"><path d="M0.500 5 Q6.500 -1.200 12.500 5 Q6.500 10.200 0.500 5z" fill="#8a8a8a" stroke="#c8c8c8" stroke-width="1"/><circle cx="6.500" cy="4.800" r="2.700" fill="#3e3e3e"/><circle cx="5.600" cy="3.900" r="1" fill="#d8d8d8"/></svg>
<div class="a" style="left:6px;top:66px;width:228px;height:20px;background:#535353;border-bottom:1px solid #303030"></div>
<div class="a" style="left:26px;top:66px;width:1px;height:20px;background:#2f2f2f"></div>
<div class="a" style="left:47px;top:66px;width:1px;height:20px;background:#2f2f2f"></div>
<div class="a" style="left:53.5px;top:66px;width:1px;height:20px;background:#2f2f2f"></div>
<div class="a" style="left:199px;top:66px;width:1px;height:20px;background:#2f2f2f"></div>
<div class="a" style="left:48px;top:66px;width:4.500px;height:20px;background:#0f880f"></div>
<svg style="left:203px;top:69px" width="14" height="14"><circle cx="6.500" cy="7" r="4" fill="none" stroke="#d4d4d4" stroke-width="1"/></svg>
<svg style="left:8.5px;top:70px" width="13" height="10"><path d="M0.500 5 Q6.500 -1.200 12.500 5 Q6.500 10.200 0.500 5z" fill="#8a8a8a" stroke="#c8c8c8" stroke-width="1"/><circle cx="6.500" cy="4.800" r="2.700" fill="#3e3e3e"/><circle cx="5.600" cy="3.900" r="1" fill="#d8d8d8"/></svg>
<div class="a" style="left:6px;top:87px;width:228px;height:20px;background:#535353;border-bottom:1px solid #303030"></div>
<div class="a" style="left:26px;top:87px;width:1px;height:20px;background:#2f2f2f"></div>
<div class="a" style="left:47px;top:87px;width:1px;height:20px;background:#2f2f2f"></div>
<div class="a" style="left:53.5px;top:87px;width:1px;height:20px;background:#2f2f2f"></div>
<div class="a" style="left:199px;top:87px;width:1px;height:20px;background:#2f2f2f"></div>
<div class="a" style="left:48px;top:87px;width:4.500px;height:20px;background:#ee7c14"></div>
<svg style="left:203px;top:90px" width="14" height="14"><circle cx="6.500" cy="7" r="4" fill="none" stroke="#d4d4d4" stroke-width="1"/></svg>
<svg style="left:58px;top:31px" width="9" height="7"><path d="M0 0.500h8.500l-4.200 6z" fill="#dcdcdc"/></svg>
<svg style="left:79px;top:50.5px" width="7" height="9"><path d="M0.500 0v8.500l6 -4.200z" fill="#dcdcdc"/></svg>
<svg style="left:59px;top:92.5px" width="7" height="9"><path d="M0.500 0v8.500l6 -4.200z" fill="#dcdcdc"/></svg>
<div class="a" style="left:75px;top:26.5px;width:18px;height:16.500px;background:#fcfcfc;border:1px solid #000"></div><svg style="left:76px;top:27.5px" width="16" height="15"><circle cx="3.500" cy="5.500" r="2.500" fill="#000"/><path d="M3.800 2.500l-.8 6.500" stroke="#fff" stroke-width=".8"/><path d="M1 12.500h14" stroke="#bbb" stroke-width=".6"/></svg>
<div class="a" style="left:95px;top:46px;width:18px;height:16.500px;background:#fcfcfc;border:1px solid #000"></div><svg style="left:96px;top:47px" width="16" height="15"><path d="M8.500 3 A4.500 4.500 0 0 0 7.500 12z" fill="#000"/><path d="M9.200 5 A4.500 4.500 0 0 1 8 14z" fill="#000"/><path d="M9.500 0.500L8.600 3M7.900 14l-.3 1" stroke="#000" stroke-width=".8"/></svg>
<div class="a" style="left:95px;top:67px;width:18px;height:16.500px;background:#fcfcfc;border:1px solid #000"></div><div class="a" style="left:96px;top:81px;width:16px;height:1px;background:#aaa"></div>
<div class="a" style="left:75px;top:88px;width:18px;height:16.500px;background:#fcfcfc;border:1px solid #000"></div><div class="a" style="left:76px;top:100.5px;width:16px;height:1px;background:#bbb"></div><div class="a" style="left:83px;top:99.5px;width:2px;height:1px;background:#666"></div>
<div class="t" style="display:inline-block;transform:scaleX(0.9718);transform-origin:0 50%;left:98px;top:29.5px;font-size:9.600px;font-weight:bold;color:#e2e6f0">Meine Ebene</div>
<div class="t" style="display:inline-block;transform:scaleX(0.9167);transform-origin:0 50%;left:118px;top:50.5px;font-size:9.600px;font-weight:bold;color:#e4e4e4">Logo</div>
<div class="t" style="display:inline-block;transform:scaleX(1.0089);transform-origin:0 50%;left:118.5px;top:71.5px;font-size:9.600px;font-weight:bold;color:#e4e4e4">&lt;Rechte...</div>
<div class="t" style="display:inline-block;transform:scaleX(0.9715);transform-origin:0 50%;left:98px;top:92.5px;font-size:9.600px;font-weight:bold;color:#e4e4e4">Vorlage</div>
<svg style="left:32.5px;top:91.5px" width="10" height="11"><path d="M2.500 5v-2 a2.500 2.500 0 0 1 5 0v2" fill="none" stroke="#bdbdbd" stroke-width="1.300"/><rect x="1" y="5" width="8" height="5.500" fill="#bdbdbd"/><rect x="4.300" y="6.500" width="1.400" height="2.500" fill="#444"/></svg>
<div class="a" style="left:220px;top:31px;width:7px;height:7px;background:#0f880f;border:1px solid #1a1a1a"></div>
<div class="a" style="left:219.5px;top:50.5px;width:9px;height:9px;background:#0f880f;border:1px solid #1a1a1a"></div>
<div class="a" style="left:2px;top:22px;width:234px;height:45.500px;border:5px solid #fe0000"></div>
<div class="a" style="left:3px;top:83px;width:29px;height:29px;border:5px solid #fe0000"></div>
<div class="t" style="display:inline-block;transform:scaleX(0.9659);transform-origin:0 50%;left:4.7999999999999545px;top:305.5px;font-size:9.600px;font-weight:bold;color:#e4e4e4">2 Ebenen</div>
<svg style="left:96px;top:302px" width="14" height="14"><circle cx="8.500" cy="5.500" r="3.800" fill="none" stroke="#cfcfcf" stroke-width="1.200"/><path d="M5.800 8.200L1 13" stroke="#cfcfcf" stroke-width="1.500"/></svg>
<svg style="left:122px;top:303px" width="13" height="13"><rect x="4" y="4" width="7.500" height="7.500" fill="#5a5a5a" stroke="#8a8a8a"/><rect x="1" y="1" width="8" height="8" fill="#6a6a6a" stroke="#cfcfcf" stroke-width="1.200"/><rect x="3.500" y="2.500" width="4" height="2.500" fill="#cfcfcf"/></svg>
<svg style="left:147px;top:303px" width="16" height="12"><path d="M7 1.500h8v9h-5.500z" fill="#cfcfcf"/><path d="M6.500 7.500l4 4v-4z" fill="#cfcfcf"/><path d="M1.500 1v3.500h4.500M4 2l2.500 2.500L4 7" fill="none" stroke="#cfcfcf" stroke-width="1.300"/></svg>
<svg style="left:175px;top:303px" width="12" height="12"><path d="M1 1h10v10h-6z" fill="#cfcfcf"/><path d="M0.500 6.500l4.500 4.500v-4.500z" fill="#cfcfcf" stroke="#474747" stroke-width=".8"/></svg>
<svg style="left:200px;top:301.5px" width="13" height="14"><path d="M1 4.500h11M4 4v-2h5v2" fill="none" stroke="#cfcfcf" stroke-width="1.300"/><path d="M2 5.500h9l-.8 7.500h-7.400z" fill="#cfcfcf"/><path d="M4.500 6.500v5.500M6.500 6.500v5.500M8.500 6.500v5.500" stroke="#474747" stroke-width=".9"/></svg>
<svg style="left:228px;top:309px" width="10" height="10"><path d="M8 0v1M6 2v1M8 2v1M4 4v1M6 4v1M8 4v1M2 6v1M4 6v1M6 6v1M8 6v1M0 8v1M2 8v1M4 8v1M6 8v1M8 8v1" stroke="#1e1e1e" stroke-width="1"/></svg>
<div class="a" style="left:0;top:320px;width:239px;height:7px;background:#484848;border-top:1px solid #2a2a2a"></div>
<div class="a" style="left:110px;top:322px;width:19px;height:4px;background:repeating-linear-gradient(90deg,#161616 0 1px,transparent 1px 2px)"></div>
</div>
</body></html>
